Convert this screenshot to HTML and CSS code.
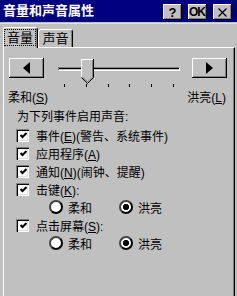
FILE: index.html
```html
<!DOCTYPE html>
<html lang="zh-CN">
<head>
<meta charset="utf-8">
<title>音量和声音属性</title>
<link rel="stylesheet" href="styles.css">
</head>
<body>
<div class="window">
  <div class="titlebar">
    <div class="title">音量和声音属性</div>
    <div class="tbtns">
      <div class="tbtn">?</div>
      <div class="tbtn ok">OK</div>
      <div class="tbtn"><svg width="9" height="9" viewBox="0 0 9 9"><path d="M0.5 0.5 L8.5 8.5 M8.5 0.5 L0.5 8.5" stroke="#000" stroke-width="1.2" fill="none"/></svg></div>
    </div>
  </div>
  <div class="body">
    <div class="tabs">
      <div class="tab active"><span class="focus">音量</span></div>
      <div class="tab">声音</div>
    </div>
    <div class="panel">
      <div class="slider-row">
        <div class="arrow"><svg width="7" height="12" viewBox="0 0 7 12"><polygon points="7,0 7,12 0,6" fill="#000"/></svg></div>
        <div class="slider">
          <div class="track"></div>
          <svg class="thumb" width="13" height="25" viewBox="0 0 13 25">
            <polygon points="0.5,0.5 12.5,0.5 12.5,18.5 6.5,24.5 0.5,18.5" fill="#c0c0c0"/>
            <polyline points="0.5,18.5 0.5,0.5 12,0.5" stroke="#fff" fill="none"/>
            <polyline points="12.5,0 12.5,18.5 6.5,24.5 0.5,18.5" stroke="#000" fill="none"/>
            <polyline points="11.5,1 11.5,18 6.5,23 1.5,18" stroke="#808080" fill="none"/>
          </svg>
          <div class="ticks"><i></i><i></i><i></i><i></i><i></i><i></i></div>
        </div>
        <div class="arrow"><svg width="7" height="12" viewBox="0 0 7 12"><polygon points="0,0 0,12 7,6" fill="#000"/></svg></div>
      </div>
      <div class="labels"><span>柔和(<u>S</u>)</span><span>洪亮(<u>L</u>)</span></div>
      <div class="heading">为下列事件启用声音:</div>
      <div class="check"><span class="box"><svg width="7" height="7" viewBox="0 0 7 7"><polyline points="0.5,3 2.5,5 6.5,1" stroke="#000" stroke-width="2" fill="none"/></svg></span><span>事件(<u>E</u>)(警告、系统事件)</span></div>
      <div class="check"><span class="box"><svg width="7" height="7" viewBox="0 0 7 7"><polyline points="0.5,3 2.5,5 6.5,1" stroke="#000" stroke-width="2" fill="none"/></svg></span><span>应用程序(<u>A</u>)</span></div>
      <div class="check"><span class="box"><svg width="7" height="7" viewBox="0 0 7 7"><polyline points="0.5,3 2.5,5 6.5,1" stroke="#000" stroke-width="2" fill="none"/></svg></span><span>通知(<u>N</u>)(闹钟、提醒)</span></div>
      <div class="check"><span class="box"><svg width="7" height="7" viewBox="0 0 7 7"><polyline points="0.5,3 2.5,5 6.5,1" stroke="#000" stroke-width="2" fill="none"/></svg></span><span>击键(<u>K</u>):</span></div>
      <div class="radios">
        <span class="ropt"><span class="radio"></span><span>柔和</span></span>
        <span class="ropt"><span class="radio on"></span><span>洪亮</span></span>
      </div>
      <div class="check"><span class="box"><svg width="7" height="7" viewBox="0 0 7 7"><polyline points="0.5,3 2.5,5 6.5,1" stroke="#000" stroke-width="2" fill="none"/></svg></span><span>点击屏幕(<u>S</u>):</span></div>
      <div class="radios">
        <span class="ropt"><span class="radio"></span><span>柔和</span></span>
        <span class="ropt"><span class="radio on"></span><span>洪亮</span></span>
      </div>
    </div>
  </div>
</div>
</body>
</html>
```

FILE: styles.css
```css
* { box-sizing: border-box; margin: 0; padding: 0; }
body {
  margin: 0;
  background: #c0c0c0;
  font-family: "Liberation Sans", "Noto Sans CJK SC", sans-serif;
  font-size: 12px;
  color: #000;
}
.window {
  width: 237px;
  height: 296px;
  overflow: hidden;
  display: flex;
  flex-direction: column;
  background: #c0c0c0;
}
.titlebar {
  height: 22px;
  flex: none;
  background: #000080;
  display: flex;
  align-items: center;
  padding: 0 5px 0 3px;
}
.title {
  flex: 1;
  color: #fff;
  font-weight: bold;
  font-size: 13px;
  line-height: 22px;
}
.tbtns { display: flex; gap: 6px; margin-top: 2px; }
.tbtn {
  width: 19px;
  height: 16px;
  background: #c0c0c0;
  box-shadow: inset -1px -1px #000, inset 1px 1px #fff, inset -2px -2px #808080;
  display: flex;
  align-items: center;
  justify-content: center;
  font-weight: bold;
  font-size: 13px;
  line-height: 1;
}
.tbtn.ok { font-size: 12px; letter-spacing: -1px; padding-right: 1px; }
.body {
  flex: 1;
  display: flex;
  flex-direction: column;
  margin-top: 1px;
  border-top: 1px solid #dfdfdf;
  padding: 3px 2px 0 3px;
}
.tabs {
  display: flex;
  align-items: flex-end;
  position: relative;
  z-index: 1;
  margin-bottom: -1px;
}
.tab {
  width: 35px;
  height: 18px;
  margin-bottom: 1px;
  background: #c0c0c0;
  border: 1px solid;
  border-color: #fff #000 transparent #fff;
  border-bottom: none;
  border-radius: 3px 3px 0 0;
  box-shadow: inset -1px 0 #808080;
  text-align: center;
  line-height: 17px;
  font-size: 13px;
}
.tab.active {
  height: 21px;
  margin-bottom: 0;
  padding: 1px 1px 0 0;
}
.focus {
  display: block;
  height: 17px;
  border: 1px dotted #000;
  line-height: 15px;
  text-align: center;
}
.panel {
  flex: 1;
  border-top: 1px solid #fff;
  border-left: 1px solid #fff;
  border-right: 1px solid #000;
  box-shadow: inset -1px 0 #808080;
  padding: 10px 7px 0 5px;
}
.slider-row {
  display: flex;
  align-items: flex-start;
  height: 29px;
}
.arrow {
  width: 35px;
  height: 20px;
  flex: none;
  background: #c0c0c0;
  box-shadow: inset -1px -1px #000, inset 1px 1px #fff, inset -2px -2px #808080;
  display: flex;
  align-items: center;
  justify-content: center;
}
.slider {
  flex: 1;
  position: relative;
  height: 29px;
  margin: 0 12px 0 14px;
}
.track {
  margin-top: 9px;
  height: 4px;
  border-top: 1px solid #808080;
  border-left: 1px solid #808080;
  border-bottom: 1px solid #fff;
  border-right: 1px solid #fff;
  box-shadow: inset 0 1px #000;
  background: #c0c0c0;
}
.thumb { position: absolute; left: 23px; top: 1px; }
.ticks {
  display: flex;
  justify-content: space-between;
  padding: 0 6px;
  margin-top: 13px;
}
.ticks i { display: block; width: 1px; height: 3px; background: #000; }
.labels {
  display: flex;
  justify-content: space-between;
  line-height: 17px;
  margin: 3px 1px 0 -1px;
}
.heading { line-height: 18px; padding-left: 8px; margin-top: 1px; }
.check {
  display: flex;
  align-items: center;
  gap: 7px;
  height: 18px;
  padding-left: 7px;
}
.box {
  width: 13px;
  height: 13px;
  flex: none;
  background: #fff;
  box-shadow: inset 1px 1px #808080, inset 2px 2px #000, inset -1px -1px #fff, inset -2px -2px #dfdfdf;
  display: flex;
  align-items: center;
  justify-content: center;
  padding: 1px 0 0 1px;
}
.radios {
  display: flex;
  align-items: center;
  height: 18px;
  padding-left: 40px;
}
.ropt { width: 70px; display: flex; align-items: center; gap: 5px; }
.radio {
  width: 14px;
  height: 14px;
  flex: none;
  border-radius: 50%;
  border: 2px solid #000;
  border-color: #404040 #000 #000 #404040;
  background: #fff;
}
.radio.on { background: radial-gradient(circle, #000 0 2.8px, #fff 3.4px); }
u { text-decoration: underline; }
```
